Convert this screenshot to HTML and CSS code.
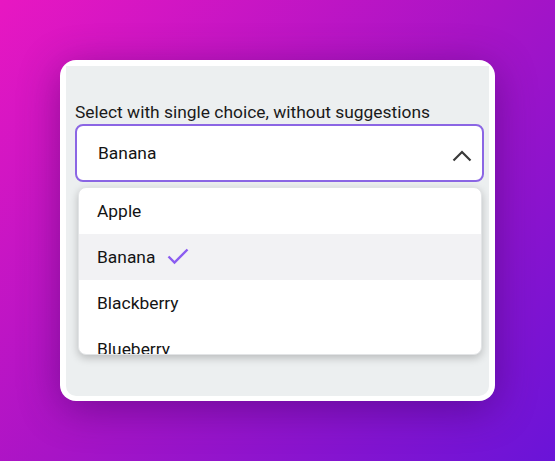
FILE: index.html
```html
<!DOCTYPE html>
<html>
<head>
<meta charset="utf-8">
<link rel="stylesheet" href="styles.css">
</head>
<body>
<div class="stage">
  <div class="card">
    <div class="panel">
      <label class="label">Select with single choice, without suggestions</label>
      <div class="select">
        <span class="value">Banana</span>
        <svg class="chevron" width="20" height="12" viewBox="0 0 20 12"><path d="M1.5 10.5 L10 2 L18.5 10.5" fill="none" stroke="#3a3a3a" stroke-width="2.2"/></svg>
      </div>
      <div class="menu">
        <div class="option">Apple</div>
        <div class="option selected">Banana
          <svg class="check" width="22" height="17" viewBox="0 0 22 17"><path d="M1.5 8.5 L7.5 14.5 L20.5 1.5" fill="none" stroke="#8b5cf0" stroke-width="2.4"/></svg>
        </div>
        <div class="option">Blackberry</div>
        <div class="option">Blueberry</div>
      </div>
    </div>
  </div>
</div>
</body>
</html>
```

FILE: styles.css
```css
html, body {
  margin: 0;
  padding: 0;
}
body {
  width: 555px;
  height: 461px;
  overflow: hidden;
  font-family: Roboto, "Liberation Sans", sans-serif;
}
.stage {
  width: 555px;
  height: 461px;
  background: linear-gradient(135deg, #e817c2 0%, #a814c6 50%, #6a14d8 100%);
  padding: 60px 0 0 60px;
  box-sizing: border-box;
}
.card {
  width: 435px;
  height: 341px;
  background: #fff;
  border-radius: 16px;
  padding: 6px 6px 5px 6px;
  box-sizing: border-box;
  box-shadow: 0 8px 40px rgba(60, 0, 90, 0.45);
}
.panel {
  height: 100%;
  background: #eceff0;
  border-radius: 0 0 10px 10px;
  padding: 35px 5px 0 9px;
  box-sizing: border-box;
}
.label {
  display: block;
  font-size: 17.4px;
  color: #1a1a1a;
  line-height: 22px;
  height: 22px;
  margin-bottom: 1px;
}
.select {
  height: 58px;
  box-sizing: border-box;
  border: 2px solid #8b66e4;
  border-radius: 8px;
  background: #fff;
  display: flex;
  align-items: center;
  padding: 0 10px 0 21px;
  justify-content: space-between;
}
.value {
  font-size: 17.4px;
  color: #141414;
  margin-top: -1px;
}
.chevron {
  margin-top: 5px;
}
.menu {
  margin: 5px 2px 0 3px;
  height: 168px;
  overflow: hidden;
  background: #fff;
  border-radius: 8px;
  border: 1px solid #e2e4e6;
  box-shadow: 0 3px 8px rgba(0, 0, 0, 0.22);
  box-sizing: border-box;
}
.option {
  height: 46px;
  display: flex;
  align-items: center;
  padding-left: 18px;
  font-size: 17.4px;
  color: #141414;
  flex-shrink: 0;
}
.option.selected {
  background: #f2f2f4;
}
.check {
  margin-left: 12px;
  margin-top: -2px;
}
```
